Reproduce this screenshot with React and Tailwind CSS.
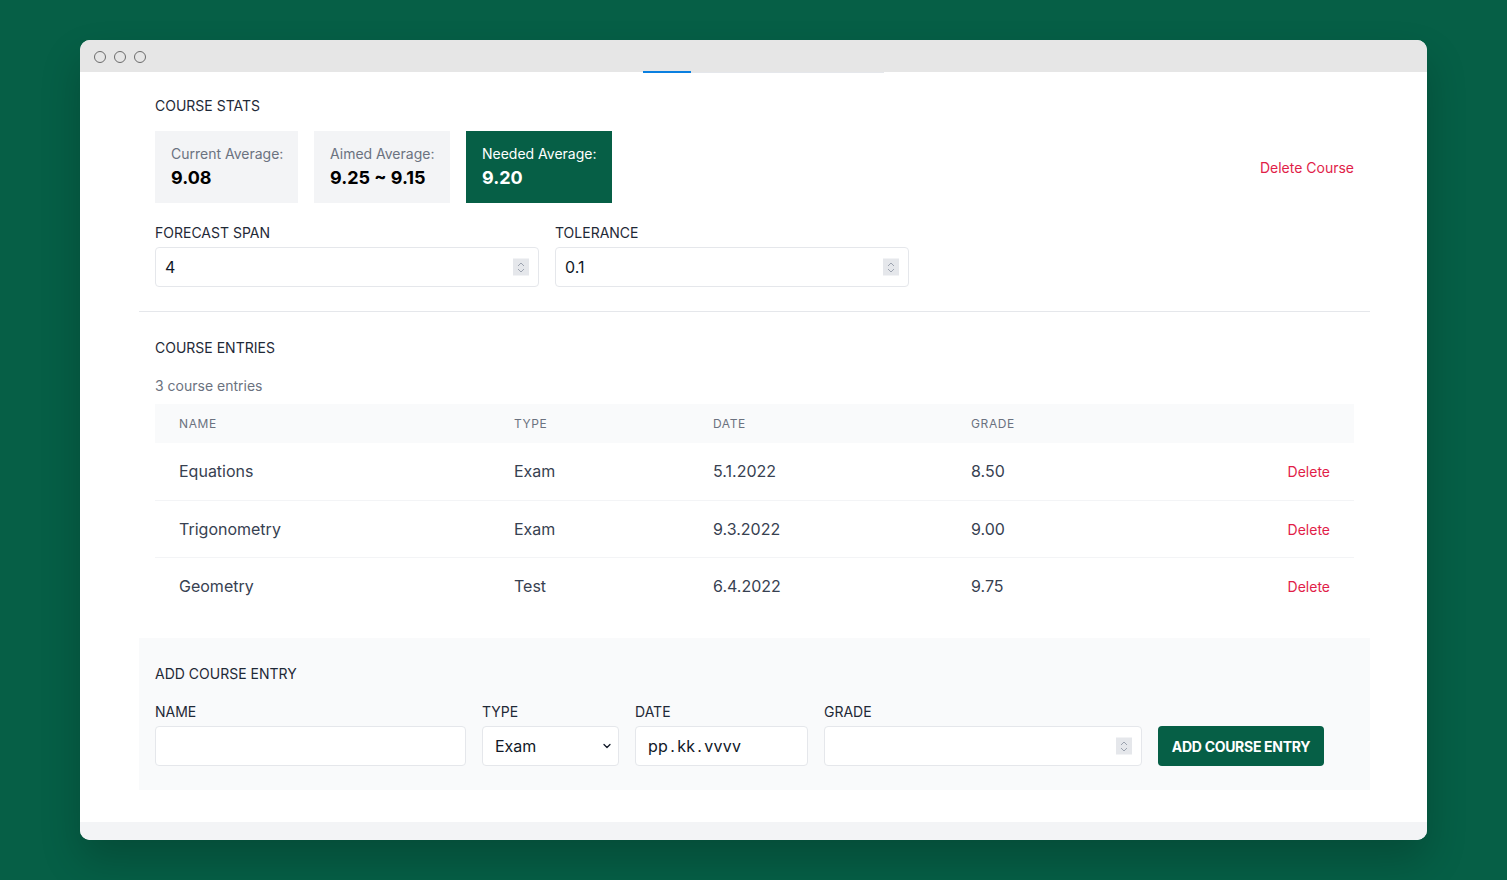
import React from 'react';
import { ChevronDown } from 'lucide-react';

const entries = [
  { name: 'Equations', type: 'Exam', date: '5.1.2022', grade: '8.50' },
  { name: 'Trigonometry', type: 'Exam', date: '9.3.2022', grade: '9.00' },
  { name: 'Geometry', type: 'Test', date: '6.4.2022', grade: '9.75' },
];

const Spinner = () => (
  <span className="absolute right-[9px] top-1/2 -translate-y-1/2 w-[16px] h-[17px] bg-[#e5e7eb] flex flex-col items-center justify-center">
    <svg width="8" height="12" viewBox="0 0 8 12" fill="none" stroke="#9ca3af" strokeWidth="1">
      <path d="M1 4.5 L4 1.5 L7 4.5" />
      <path d="M1 7.5 L4 10.5 L7 7.5" />
    </svg>
  </span>
);

const NumberField = ({ value, className }) => (
  <div className={`relative h-10 bg-white border border-[#e5e7eb] rounded ${className || ''}`}>
    <input
      type="text"
      readOnly
      value={value}
      className="w-full h-full px-[9px] bg-transparent text-[16px] text-[#111827] outline-none"
    />
    <Spinner />
  </div>
);

const StatCard = ({ label, value, dark, className }) => (
  <div className={`h-[72px] px-4 flex flex-col justify-center whitespace-nowrap ${dark ? 'bg-[#065f46]' : 'bg-[#f3f4f6]'} ${className}`}>
    <p className={`text-[14px] leading-5 ${dark ? 'text-white' : 'text-[#6b7280]'}`}>{label}</p>
    <p className={`text-[18px] leading-6 font-bold mt-[2px] ${dark ? 'text-white' : 'text-black'}`}>{value}</p>
  </div>
);

export default function App() {
  return (
    <div className="min-h-screen bg-[#065f46] py-10 px-20" style={{ fontFamily: 'Inter, "Noto Sans", sans-serif' }}>
      <div className="rounded-[10px] overflow-hidden bg-white shadow-[0_20px_40px_rgba(0,0,0,0.2)]">
        {/* title bar */}
        <div className="relative h-8 bg-[#e6e6e6] flex items-center gap-2 pl-[14px] pt-[1px]">
          <span className="w-[12px] h-[12px] rounded-full border border-[#6b6b6b]" />
          <span className="w-[12px] h-[12px] rounded-full border border-[#6b6b6b]" />
          <span className="w-[12px] h-[12px] rounded-full border border-[#6b6b6b]" />
          <div className="absolute left-[563px] -bottom-[1px] flex items-end">
            <span className="w-[48px] h-[2px] bg-[#0a7fe0]" />
            <span className="w-[193px] h-[1px] bg-[#e5e7eb]" />
          </div>
        </div>

        <div className="pl-[59px] pr-[57px] pb-8">
          {/* Course stats */}
          <div className="px-4 pt-[24px]">
            <h2 className="text-[14px] leading-5 text-[#1f2937] uppercase">Course Stats</h2>
            <div className="flex items-center mt-[15px]">
              <StatCard label="Current Average:" value="9.08" className="w-[143px]" />
              <StatCard label="Aimed Average:" value="9.25 ~ 9.15" className="w-[136px] ml-4" />
              <StatCard label="Needed Average:" value="9.20" dark className="w-[146px] ml-4" />
              <button className="ml-auto text-[14px] text-[#e11d48]">Delete Course</button>
            </div>
            <div className="flex gap-4 mt-[20px]">
              <div className="w-[384px]">
                <label className="block text-[14px] leading-5 text-[#1f2937] uppercase mb-[4px]">Forecast span</label>
                <NumberField value="4" />
              </div>
              <div className="w-[354px]">
                <label className="block text-[14px] leading-5 text-[#1f2937] uppercase mb-[4px]">Tolerance</label>
                <NumberField value="0.1" />
              </div>
            </div>
          </div>

          <hr className="border-t border-[#e5e7eb] mt-[24px]" />

          {/* Course entries */}
          <div className="px-4 pt-[26px]">
            <h2 className="text-[14px] leading-5 text-[#1f2937] uppercase">Course Entries</h2>
            <p className="text-[14px] leading-5 text-[#6b7280] mt-[18px]">3 course entries</p>
            <table className="w-full mt-[8px] border-collapse table-fixed">
              <colgroup>
                <col className="w-[359px]" />
                <col className="w-[199px]" />
                <col className="w-[258px]" />
                <col className="w-[200px]" />
                <col />
              </colgroup>
              <thead>
                <tr className="bg-[#f9fafb] h-[39px]">
                  <th className="text-left pl-6 text-[12px] font-normal tracking-wider text-[#6b7280] uppercase">Name</th>
                  <th className="text-left text-[12px] font-normal tracking-wider text-[#6b7280] uppercase">Type</th>
                  <th className="text-left text-[12px] font-normal tracking-wider text-[#6b7280] uppercase">Date</th>
                  <th className="text-left text-[12px] font-normal tracking-wider text-[#6b7280] uppercase">Grade</th>
                  <th />
                </tr>
              </thead>
              <tbody>
                {entries.map((e, i) => (
                  <tr key={i} className={`h-[57px] ${i < entries.length - 1 ? 'border-b border-[#f3f4f6]' : ''}`}>
                    <td className="pl-6 text-[16px] text-[#374151]">{e.name}</td>
                    <td className="text-[16px] text-[#374151]">{e.type}</td>
                    <td className="text-[16px] text-[#374151]">{e.date}</td>
                    <td className="text-[16px] text-[#374151]">{e.grade}</td>
                    <td className="text-right pr-6">
                      <button className="text-[14px] text-[#e11d48]">Delete</button>
                    </td>
                  </tr>
                ))}
              </tbody>
            </table>
          </div>

          {/* Add course entry */}
          <div className="bg-[#f9fafb] mt-[24px] px-4 pt-[26px] pb-[24px]">
            <h2 className="text-[14px] leading-5 text-[#1f2937] uppercase">Add Course Entry</h2>
            <div className="flex items-end gap-4 mt-[18px]">
              <div className="w-[311px]">
                <label className="block text-[14px] leading-5 text-[#1f2937] uppercase mb-[4px]">Name</label>
                <input type="text" className="w-full h-10 bg-white border border-[#e5e7eb] rounded px-3 outline-none" />
              </div>
              <div className="w-[137px]">
                <label className="block text-[14px] leading-5 text-[#1f2937] uppercase mb-[4px]">Type</label>
                <div className="relative h-10 bg-white border border-[#e5e7eb] rounded flex items-center pl-3">
                  <span className="text-[16px] text-[#111827]">Exam</span>
                  <ChevronDown className="absolute right-[5px] w-[12px] h-[12px] text-[#111827]" strokeWidth={2.5} />
                </div>
              </div>
              <div className="w-[173px]">
                <label className="block text-[14px] leading-5 text-[#1f2937] uppercase mb-[4px]">Date</label>
                <div className="h-10 bg-white border border-[#e5e7eb] rounded flex items-center pl-3">
                  <span className="text-[16px] text-[#111827] tracking-[0.3px]">pp<span className="mx-[2px]">.</span>kk<span className="mx-[2px]">.</span>vvvv</span>
                </div>
              </div>
              <div className="w-[318px]">
                <label className="block text-[14px] leading-5 text-[#1f2937] uppercase mb-[4px]">Grade</label>
                <NumberField value="" />
              </div>
              <button className="h-10 w-[166px] rounded bg-[#065f46] text-white text-[14px] font-bold uppercase whitespace-nowrap tracking-[-0.3px]">
                Add Course Entry
              </button>
            </div>
          </div>
        </div>
        <div className="h-[18px] bg-[#f3f4f6]" />
      </div>
    </div>
  );
}
